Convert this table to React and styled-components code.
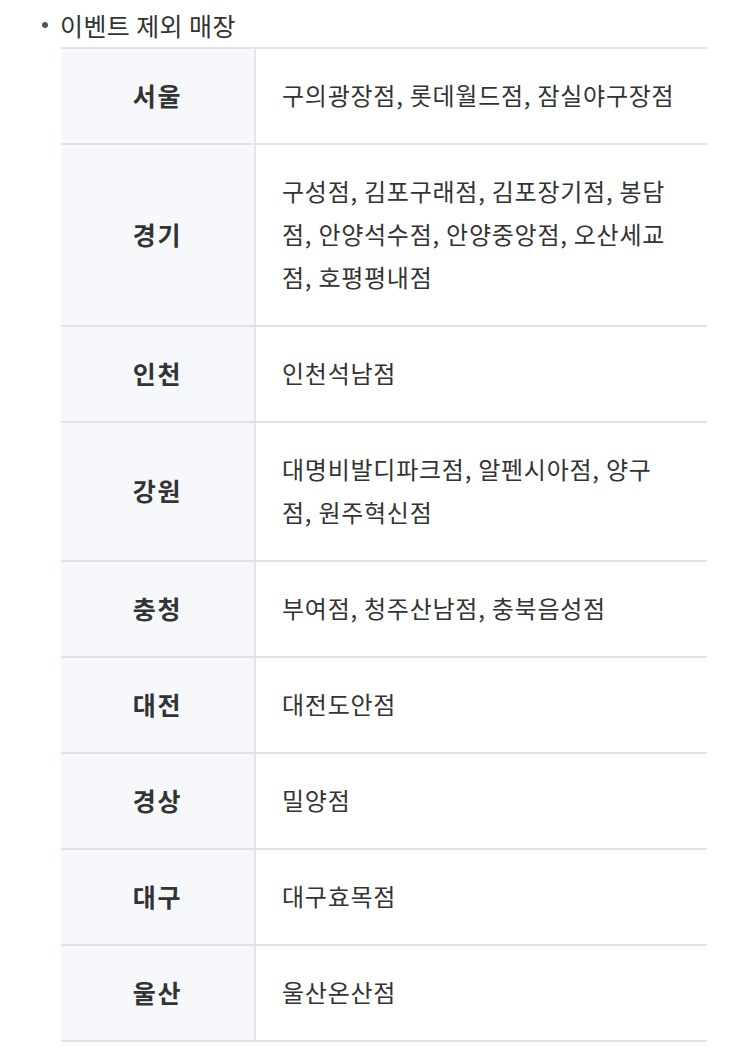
import React from 'react'
import styled, { createGlobalStyle } from 'styled-components'

const GlobalStyle = createGlobalStyle`
  html, body {
    margin: 0;
    padding: 0;
    background: #fff;
  }
  body {
    font-family: "Noto Sans CJK KR", "Noto Sans", sans-serif;
    color: #333;
  }
`

const Page = styled.div`
  width: 750px;
  padding: 3px 0 0 38px;
  box-sizing: border-box;
`

const Heading = styled.div`
  display: flex;
  align-items: center;
  gap: 12px;
  height: 44px;
  font-size: 25px;
  color: #333;
  letter-spacing: 0.4px;

  &::before {
    content: '';
    width: 6px;
    height: 6px;
    border-radius: 50%;
    background: #555;
    margin-left: 4px;
  }
`

const Table = styled.div`
  margin-left: 23px;
  width: 646px;
  border-top: 2px solid #e2e2e2;
`

const Row = styled.div`
  display: grid;
  grid-template-columns: 195px 1fr;
  border-bottom: 2px solid #e2e2e2;
`

const Region = styled.div`
  background: #f7f8fb;
  border-right: 2px solid #e6e6e6;
  display: flex;
  align-items: center;
  justify-content: center;
  padding-bottom: 3px;
  font-size: 25px;
  font-weight: 700;
  letter-spacing: 1.8px;
  color: #333;
`

const Stores = styled.div`
  padding: 24px 20px 27px 26px;
  font-size: 24px;
  line-height: 43px;
  color: #333;
  letter-spacing: 0.75px;
  white-space: nowrap;
`

const rows = [
  ['서울', '구의광장점, 롯데월드점, 잠실야구장점'],
  ['경기', '구성점, 김포구래점, 김포장기점, 봉담\n점, 안양석수점, 안양중앙점, 오산세교\n점, 호평평내점'],
  ['인천', '인천석남점'],
  ['강원', '대명비발디파크점, 알펜시아점, 양구\n점, 원주혁신점'],
  ['충청', '부여점, 청주산남점, 충북음성점'],
  ['대전', '대전도안점'],
  ['경상', '밀양점'],
  ['대구', '대구효목점'],
  ['울산', '울산온산점'],
]

export default function App() {
  return (
    <Page>
      <GlobalStyle />
      <Heading>이벤트 제외 매장</Heading>
      <Table>
        {rows.map(([region, stores]) => (
          <Row key={region}>
            <Region>{region}</Region>
            <Stores>
              {stores.split('\n').map((line, i) => (
                <div key={i}>{line}</div>
              ))}
            </Stores>
          </Row>
        ))}
      </Table>
    </Page>
  )
}
